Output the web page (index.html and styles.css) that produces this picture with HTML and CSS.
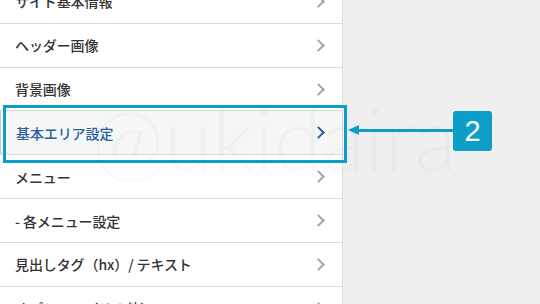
FILE: index.html
```html
<!DOCTYPE html>
<html lang="ja">
<head>
    <meta charset="UTF-8">
    <title>カスタマイズ</title>
    <link rel="stylesheet" href="styles.css">
</head>
<body>
    <div class="screen">
        <ul class="menu">
            <li class="row">サイト基本情報<span class="chev"></span></li>
            <li class="row">ヘッダー画像<span class="chev"></span></li>
            <li class="row">背景画像<span class="chev"></span></li>
            <li class="row active">基本エリア設定<span class="chev"></span></li>
            <li class="row">メニュー<span class="chev"></span></li>
            <li class="row">- 各メニュー設定<span class="chev"></span></li>
            <li class="row">見出しタグ（hx）/ テキスト<span class="chev"></span></li>
            <li class="row">オプション（その他）<span class="chev"></span></li>
        </ul>
        <div class="side"></div>

        <!-- annotation -->
        <div class="watermark">@ukidaira</div>
        <div class="mark-box"></div>
        <div class="mark-line"></div>
        <div class="mark-head"></div>
        <div class="badge">2</div>
    </div>
</body>
</html>
```

FILE: styles.css
```css
body {
    margin: 0;
    padding: 0;
    font-family: "Noto Sans CJK JP", "Noto Sans", sans-serif;
    background-color: #efefef;
}
.screen {
    position: relative;
    width: 540px;
    height: 304px;
    overflow: hidden;
    display: flex;
}
.menu {
    list-style: none;
    margin: -20px 0 0 0;
    padding: 0;
    width: 342px;
    background-color: #fff;
    border-right: 1px solid #dcdcdc;
}
.row {
    box-sizing: border-box;
    height: 43.83px;
    display: flex;
    align-items: center;
    justify-content: space-between;
    padding: 0 0 0 15px;
    border-bottom: 1px solid #dcdcdc;
    font-size: 14px;
    font-weight: 500;
    color: #333;
    letter-spacing: -0.1px;
}
.chev {
    width: 7px;
    height: 7px;
    margin-right: 19px;
    border-top: 2px solid #a0a5aa;
    border-right: 2px solid #a0a5aa;
    transform: rotate(45deg);
}
.row.active {
    background-color: #f5f6f6;
    border-left: 1px solid #c8c8c8;
    color: #2a5f9e;
}
.row.active .chev {
    border-color: #2a5f9e;
}
.side {
    flex: 1;
}
.watermark {
    position: absolute;
    left: 91px;
    top: 93px;
    font-family: Lato, sans-serif;
    font-weight: 300;
    font-size: 88px;
    line-height: 1;
    color: rgba(0, 0, 0, 0.022);
    white-space: nowrap;
}
.mark-box {
    position: absolute;
    left: 3px;
    top: 105px;
    width: 338px;
    height: 52px;
    border: 3px solid #0b9fc8;
}
.mark-line {
    position: absolute;
    left: 354px;
    top: 129px;
    width: 100px;
    height: 3px;
    background-color: #0b9fc8;
}
.mark-head {
    position: absolute;
    left: 348px;
    top: 125px;
    width: 0;
    height: 0;
    border-top: 5.5px solid transparent;
    border-bottom: 5.5px solid transparent;
    border-right: 11px solid #0b9fc8;
}
.badge {
    position: absolute;
    left: 453px;
    top: 111px;
    width: 39px;
    height: 40px;
    border-radius: 3px;
    background-color: #0b9fc8;
    color: #fff;
    font-family: "Liberation Sans", Arial, sans-serif;
    font-size: 29px;
    line-height: 40px;
    text-align: center;
}
```
